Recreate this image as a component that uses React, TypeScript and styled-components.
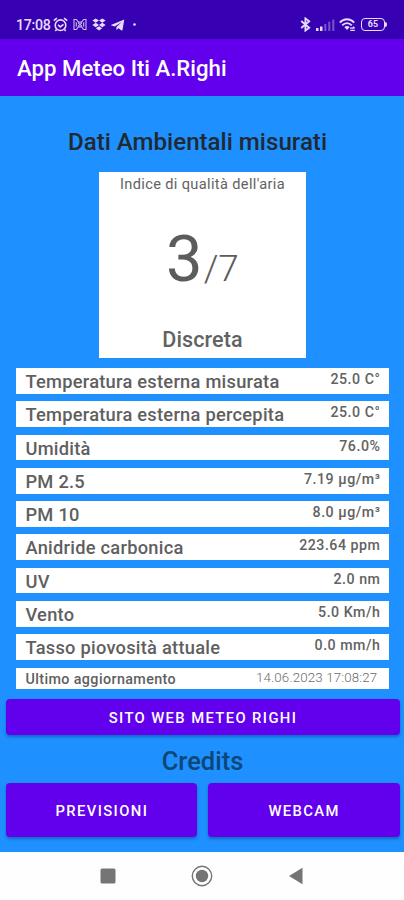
import React from "react";
import styled, { createGlobalStyle } from "styled-components";

const GlobalStyle = createGlobalStyle`
  * { box-sizing: border-box; }
  body { margin: 0; background: #fefefe; font-family: Roboto, sans-serif; }
`;

const Screen = styled.div`
  width: 404px;
  height: 900px;
  display: flex;
  flex-direction: column;
  overflow: hidden;
`;

const StatusBar = styled.div`
  height: 38.5px;
  flex: none;
  background: #3700b3;
  color: #e6dcfa;
  display: flex;
  justify-content: space-between;
  padding: 15px 17px 0 16px;
`;

const StatusGroup = styled.div<{ $gap: number }>`
  display: flex;
  align-items: center;
  height: 19px;
  gap: ${(p) => p.$gap}px;
`;

const Clock = styled.span`
  font-size: 14.2px;
  font-weight: 500;
  letter-spacing: -0.3px;
  margin-right: -2px;
`;

const AppBar = styled.header`
  height: 57px;
  flex: none;
  background: #6200ee;
  color: #fff;
  display: flex;
  align-items: center;
  padding: 2px 17px 0;
  font-size: 22.2px;
  font-weight: 500;
`;

const Content = styled.main`
  height: 756px;
  flex: none;
  background: #1e90ff;
  display: flex;
  flex-direction: column;
  align-items: center;
  padding-left: 1px;
`;

const Heading = styled.h1`
  margin: 31px 10px 0 0;
  height: 45px;
  line-height: 30px;
  font-size: 24.1px;
  font-weight: 500;
  color: #202a30;
`;

const QualityCard = styled.section`
  width: 207px;
  height: 186px;
  flex: none;
  background: #fff;
  color: #626262;
  display: flex;
  flex-direction: column;
  align-items: center;
`;

const CardTitle = styled.div`
  font-size: 14.6px;
  line-height: 24px;
  letter-spacing: 0.35px;
`;

const Score = styled.div`
  margin-top: 24px;
  line-height: 78px;
  font-size: 65px;
  font-weight: 370;
  color: #5c5c5c;
`;

const ScoreMax = styled.span`
  font-size: 37px;
  font-weight: 330;
  margin-left: 1px;
`;

const Verdict = styled.div`
  margin-top: 19px;
  font-size: 21.5px;
  line-height: 26px;
  font-weight: 500;
  letter-spacing: 0.1px;
`;

const Readings = styled.section`
  width: 372.5px;
  margin-top: 10.5px;
  display: flex;
  flex-direction: column;
  gap: 7.6px;
`;

const Row = styled.div<{ $compact?: boolean }>`
  height: ${(p) => (p.$compact ? 21.2 : 25.7)}px;
  background: #fff;
  display: flex;
  justify-content: space-between;
  padding: 0 ${(p) => (p.$compact ? 11.5 : 8.3)}px 0 9.2px;
`;

const Label = styled.span<{ $compact?: boolean }>`
  font-size: ${(p) => (p.$compact ? 14.3 : 18.3)}px;
  line-height: ${(p) => (p.$compact ? 23 : 28)}px;
  font-weight: 500;
  letter-spacing: ${(p) => (p.$compact ? 0.4 : 0.25)}px;
  color: #5f5f5f;
`;

const Value = styled.span<{ $compact?: boolean }>`
  font-size: ${(p) => (p.$compact ? 13.3 : 14.2)}px;
  line-height: ${(p) => (p.$compact ? 20 : 23)}px;
  font-weight: ${(p) => (p.$compact ? 300 : 500)};
  letter-spacing: ${(p) => (p.$compact ? 0.15 : 0.52)}px;
  color: ${(p) => (p.$compact ? "#6c6c6c" : "#626262")};
`;

const Button = styled.button<{ $height: number }>`
  flex: 1;
  height: ${(p) => p.$height}px;
  border: 0;
  border-radius: 4px;
  background: #6200ee;
  color: #fff;
  box-shadow: 0 2px 3px rgba(0, 30, 90, 0.35);
  font-family: inherit;
  font-size: 14.8px;
  font-weight: 500;
  letter-spacing: 1.38px;
  padding: 2px 0 0 1px;
`;

const ButtonRow = styled.div<{ $top: number }>`
  width: 394px;
  margin-top: ${(p) => p.$top}px;
  display: flex;
  gap: 10.5px;
`;

const Credits = styled.div`
  margin-top: 10.5px;
  height: 30px;
  line-height: 31px;
  font-size: 25.5px;
  font-weight: 500;
  color: #0d4677;
`;

const NavBar = styled.nav`
  height: 48.5px;
  flex: none;
  background: #fefefe;
  display: flex;
  justify-content: center;
  align-items: center;
  gap: 75px;
`;

const AlarmIcon = () => (
  <svg width="15" height="15" viewBox="0 0 15 15" fill="none" stroke="currentColor" strokeWidth="1.6">
    <circle cx="7.5" cy="8.2" r="5.3" />
    <path d="M0.8 3.7 3.9 1.1M14.2 3.7 11.1 1.1M5 7.7l2.2 2.2 3.3-2.6M3.6 12.5 2.3 14M11.4 12.5l1.3 1.5" />
  </svg>
);

const CastIcon = () => (
  <svg width="14" height="13" viewBox="0 0 14 13" fill="none" stroke="currentColor" strokeWidth="1.1" opacity="0.85">
    <path d="M1 1.5h2.4l2 2.6h3.2l2-2.6H13v10h-2.4l-2-2.6H5.4l-2 2.6H1zM3.3 4.2v4.6M10.7 4.2v4.6M5.2 5.2l3.6 2.6M8.8 5.2 5.2 7.8" />
  </svg>
);

const DropboxIcon = () => (
  <svg width="14" height="13" viewBox="0 0 14 13" fill="currentColor">
    <path d="M3.7.4 7 2.6 3.7 4.8.4 2.6zM10.3.4l3.3 2.2-3.3 2.2L7 2.6zM3.7 4.8 7 7 3.7 9.2.4 7zM10.3 4.8 13.6 7l-3.3 2.2L7 7zM7 8.2l3.2 2.1L7 12.4l-3.2-2.1z" />
  </svg>
);

const TelegramIcon = () => (
  <svg width="14" height="12" viewBox="0 0 14 12" fill="currentColor">
    <path d="M13.3.4.5 5.7c-.5.3-.4.7.1.9l3.1 1L10.8 3 5.4 8.1v3l2.1-1.9 3 2.2c.5.3.9.1 1-.5z" />
  </svg>
);

const DotIcon = () => (
  <svg width="7" height="3" viewBox="0 0 7 3" fill="currentColor">
    <circle cx="5.5" cy="1.5" r="1.3" />
  </svg>
);

const BluetoothIcon = () => (
  <svg width="11" height="15" viewBox="0 0 11 15" fill="none" stroke="currentColor" strokeWidth="1.8">
    <path d="m1.2 4 8 6.8L5.4 13.6V1.4l3.8 2.8-8 6.8" />
  </svg>
);

const SignalIcon = () => (
  <svg width="19" height="12" viewBox="0 0 19 12" fill="currentColor">
    <path d="M0 9h2.5v3H0zM4 7.5h2.5V12H4z" />
    <path d="M8.3 5h2v7h-2zM12.3 2.7h2V12h-2zM16.3.5h2V12h-2z" opacity=".38" />
  </svg>
);

const WifiIcon = () => (
  <svg width="17" height="14" viewBox="0 0 17 14" fill="none" stroke="currentColor" strokeWidth="1.8">
    <path d="M.8 4.6c4-4.5 10.4-4.5 14.4 0M3.2 7.3c2.8-3 6.8-3 9.6 0" />
    <path d="M5.3 9.1c1.7-1.6 3.7-1.6 5.4 0L8 12.1z" fill="currentColor" stroke="none" />
    <path d="M11 10.2h4.5M14 8.7l1.6 1.5M15.8 12.4h-4.5" strokeWidth="1.3" />
  </svg>
);

const BatteryBox = styled.div`
  display: flex;
  align-items: center;
`;

const BatteryBody = styled.div`
  width: 24px;
  height: 13px;
  border: 1.6px solid currentColor;
  border-radius: 4px;
  display: flex;
  align-items: center;
  justify-content: center;
  font-size: 9px;
  line-height: 9px;
  font-weight: 700;
`;

const BatteryTip = styled.div`
  width: 2px;
  height: 5px;
  background: currentColor;
  border-radius: 0 2px 2px 0;
`;

const readings = [
  ["Temperatura esterna misurata", "25.0 C°"],
  ["Temperatura esterna percepita", "25.0 C°"],
  ["Umidità", "76.0%"],
  ["PM 2.5", "7.19 µg/m³"],
  ["PM 10", "8.0 µg/m³"],
  ["Anidride carbonica", "223.64 ppm"],
  ["UV", "2.0 nm"],
  ["Vento", "5.0 Km/h"],
  ["Tasso piovosità attuale", "0.0 mm/h"],
];

export default function App() {
  return (
    <Screen>
      <GlobalStyle />
      <StatusBar>
        <StatusGroup $gap={4.8}>
          <Clock>17:08</Clock>
          <AlarmIcon />
          <CastIcon />
          <DropboxIcon />
          <TelegramIcon />
          <DotIcon />
        </StatusGroup>
        <StatusGroup $gap={4.7}>
          <BluetoothIcon />
          <SignalIcon />
          <WifiIcon />
          <BatteryBox>
            <BatteryBody>65</BatteryBody>
            <BatteryTip />
          </BatteryBox>
        </StatusGroup>
      </StatusBar>
      <AppBar>App Meteo Iti A.Righi</AppBar>
      <Content>
        <Heading>Dati Ambientali misurati</Heading>
        <QualityCard>
          <CardTitle>Indice di qualità dell'aria</CardTitle>
          <Score>
            3<ScoreMax>/7</ScoreMax>
          </Score>
          <Verdict>Discreta</Verdict>
        </QualityCard>
        <Readings>
          {readings.map(([label, value]) => (
            <Row key={label}>
              <Label>{label}</Label>
              <Value>{value}</Value>
            </Row>
          ))}
          <Row $compact>
            <Label $compact>Ultimo aggiornamento</Label>
            <Value $compact>14.06.2023 17:08:27</Value>
          </Row>
        </Readings>
        <ButtonRow $top={10}>
          <Button $height={36.5}>SITO WEB METEO RIGHI</Button>
        </ButtonRow>
        <Credits>Credits</Credits>
        <ButtonRow $top={7}>
          <Button $height={54.5}>PREVISIONI</Button>
          <Button $height={54.5}>WEBCAM</Button>
        </ButtonRow>
      </Content>
      <NavBar>
        <svg width="16" height="16" viewBox="0 0 16 16" fill="#757575">
          <rect x=".5" y=".5" width="15" height="15" rx="1.5" />
        </svg>
        <svg width="22" height="22" viewBox="0 0 22 22" fill="#757575">
          <circle cx="11" cy="11" r="9.7" fill="none" stroke="#757575" strokeWidth="1.4" />
          <circle cx="11" cy="11" r="6.2" />
        </svg>
        <svg width="16" height="18" viewBox="0 0 16 18" fill="#757575">
          <path d="M14.5.8v16.4L1 9z" />
        </svg>
      </NavBar>
    </Screen>
  );
}
